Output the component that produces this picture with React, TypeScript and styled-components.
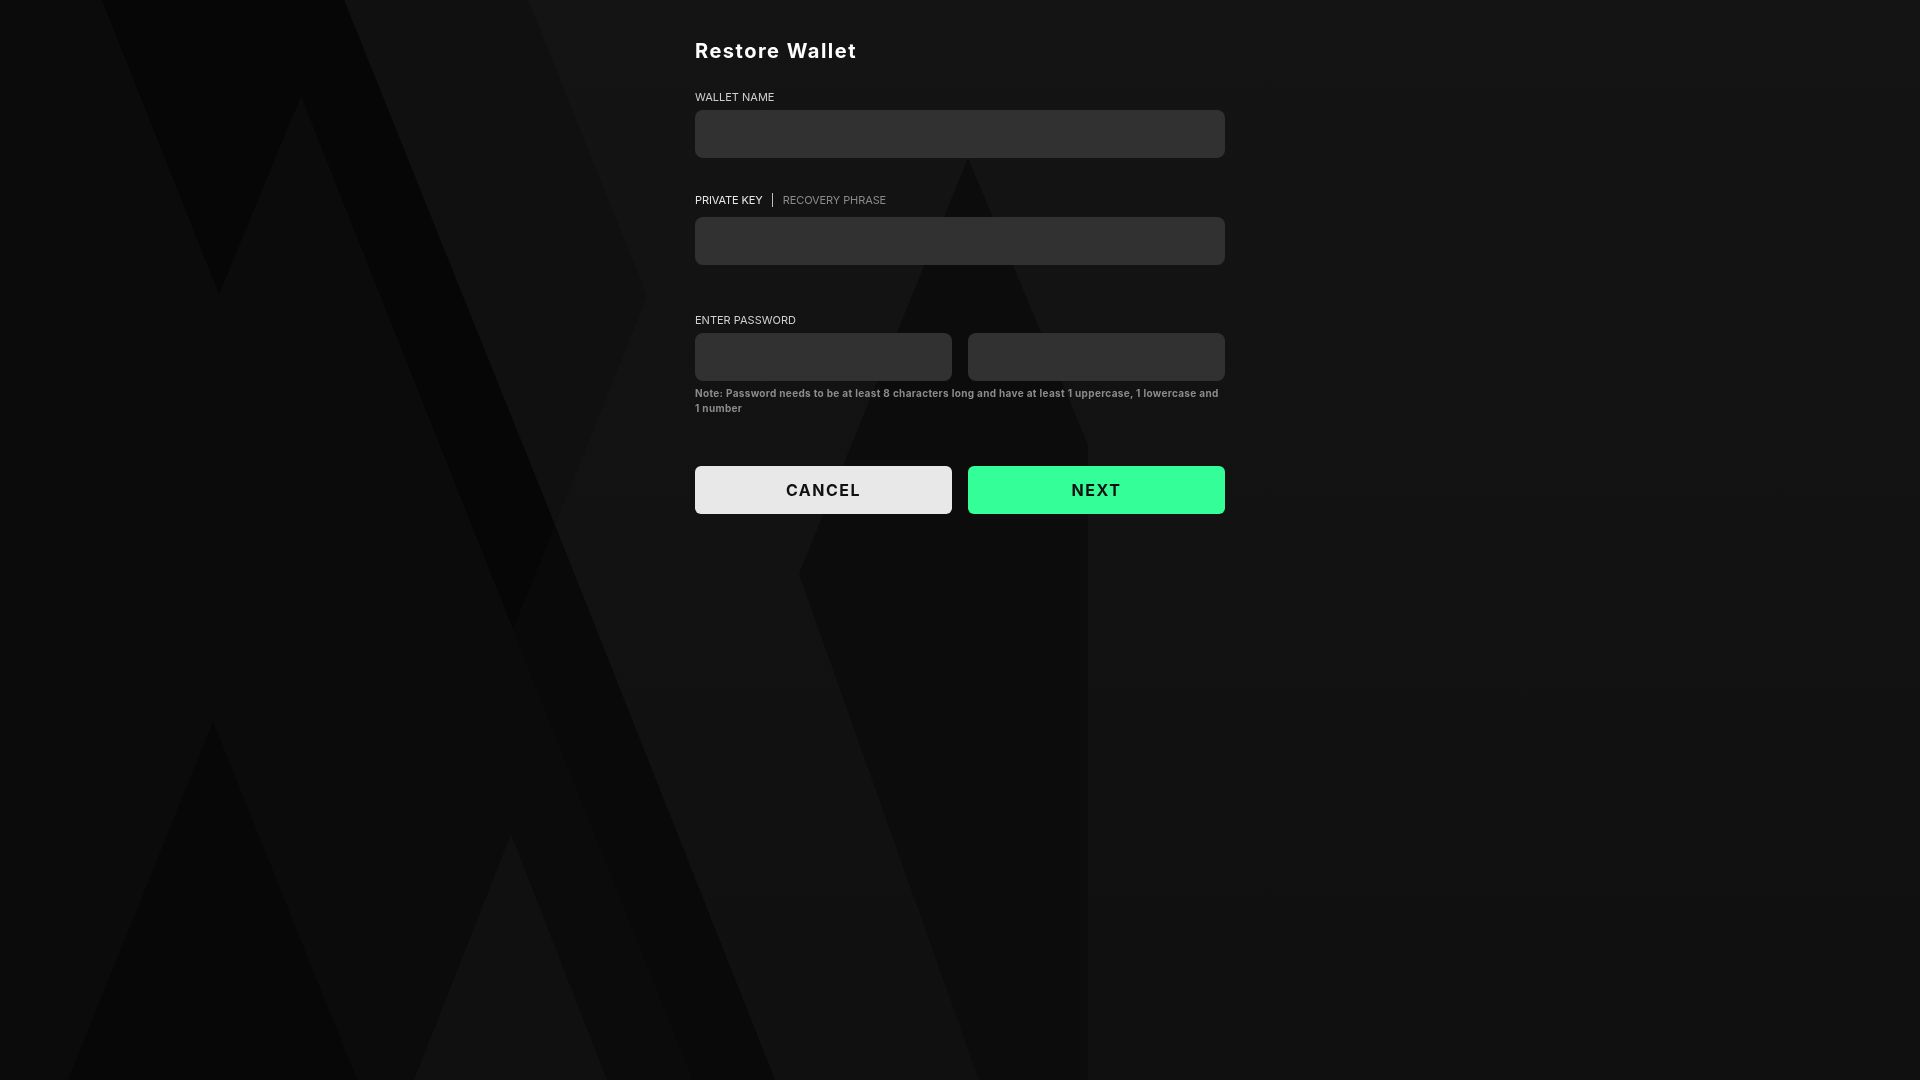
import styled, { createGlobalStyle } from "styled-components";

const GlobalStyle = createGlobalStyle`
  html, body {
    margin: 0;
    padding: 0;
    background: #131313;
  }
  body {
    font-family: Inter, "Open Sans", "DejaVu Sans", sans-serif;
    color: #ffffff;
  }
  * {
    box-sizing: border-box;
  }
`;

const Page = styled.div`
  position: relative;
  min-height: 100vh;
  display: flex;
  justify-content: center;
  overflow: hidden;
`;

const Backdrop = styled.svg`
  position: fixed;
  inset: 0;
  width: 100%;
  height: 100%;
  z-index: 0;
`;

const Form = styled.form`
  position: relative;
  z-index: 1;
  width: 530px;
  padding-top: 39px;
  display: flex;
  flex-direction: column;
`;

const Title = styled.h1`
  margin: 0;
  font-size: 20px;
  line-height: 24px;
  font-weight: 700;
  color: #ffffff;
  letter-spacing: 1.5px;
`;

const Field = styled.div<{ $top: number }>`
  margin-top: ${({ $top }) => $top}px;
  display: flex;
  flex-direction: column;
`;

const Label = styled.label`
  display: block;
  font-size: 11px;
  line-height: 14px;
  font-weight: 400;
  color: #cfcfcf;
  text-transform: uppercase;
  margin-bottom: 6px;
`;

const Tabs = styled.div`
  display: flex;
  align-items: center;
  height: 14px;
  margin-bottom: 10px;
`;

const Tab = styled.span<{ $active?: boolean }>`
  font-size: 11px;
  line-height: 14px;
  color: ${({ $active }) => ($active ? "#e6e6e6" : "#8a8a8a")};
  text-transform: uppercase;
  letter-spacing: -0.1px;
  cursor: pointer;
`;

const TabDivider = styled.span`
  width: 1px;
  height: 14px;
  background: #bdbdbd;
  margin: 0 10px 0 9px;
`;

const Input = styled.input`
  width: 100%;
  height: 48px;
  border: none;
  outline: none;
  border-radius: 8px;
  background: #313131;
  color: #ffffff;
  padding: 0 16px;
  font-family: inherit;
  font-size: 14px;
`;

const Pair = styled.div`
  display: grid;
  grid-template-columns: 1fr 1fr;
  gap: 16px;
`;

const Note = styled.p`
  margin: 5px 0 0;
  font-size: 10px;
  line-height: 15px;
  font-weight: 700;
  letter-spacing: 0.33px;
  color: #8b8b8b;
`;

const NoBreak = styled.span`
  white-space: nowrap;
`;

const Actions = styled.div`
  margin-top: 50px;
  display: grid;
  grid-template-columns: 1fr 1fr;
  gap: 16px;
`;

const Button = styled.button<{ $primary?: boolean }>`
  height: 48px;
  border: none;
  border-radius: 6px;
  background: ${({ $primary }) => ($primary ? "#34fe98" : "#e8e8e8")};
  color: #111111;
  font-family: inherit;
  font-size: 16px;
  font-weight: 700;
  letter-spacing: 1.5px;
  text-transform: uppercase;
  cursor: pointer;
`;

const BackgroundArt = () => (
  <Backdrop viewBox="0 0 1920 1080" preserveAspectRatio="none">
    <defs>
      <linearGradient id="base" x1="0" y1="0" x2="0" y2="1">
        <stop offset="0" stopColor="#141414" />
        <stop offset="1" stopColor="#101010" />
      </linearGradient>
    </defs>
    <rect x="0" y="0" width="1920" height="1080" fill="url(#base)" />
    <polygon points="0,0 344,0 775,1080 0,1080" fill="#0b0b0b" />
    <polygon points="344,0 528,0 647,296 555,525" fill="#101010" />
    <polygon points="102,0 344,0 555,525 513,629 301,96 219,294" fill="#060606" />
    <polygon points="513,629 555,525 775,1080 693,1080" fill="#090909" />
    <polygon points="968,158 1088,445 1088,1080 979,1080 799,574" fill="#0c0c0c" />
    <polygon points="213,722 357,1080 68,1080" fill="#070707" />
    <polygon points="511,834 607,1080 414,1080" fill="#101010" />
  </Backdrop>
);

const App = () => {
  return (
    <>
      <GlobalStyle />
      <Page>
        <BackgroundArt />
        <Form onSubmit={(e) => e.preventDefault()}>
          <Title>Restore Wallet</Title>

          <Field $top={27}>
            <Label>Wallet Name</Label>
            <Input type="text" />
          </Field>

          <Field $top={35}>
            <Tabs>
              <Tab $active>Private Key</Tab>
              <TabDivider />
              <Tab>Recovery Phrase</Tab>
            </Tabs>
            <Input type="text" />
          </Field>

          <Field $top={48}>
            <Label>Enter Password</Label>
            <Pair>
              <Input type="password" />
              <Input type="password" />
            </Pair>
            <Note>
              Note: Password needs to be at least 8 characters long and have at
              least 1 uppercase, 1 lowercase and <NoBreak>1 number</NoBreak>
            </Note>
          </Field>

          <Actions>
            <Button type="button">Cancel</Button>
            <Button type="submit" $primary>
              Next
            </Button>
          </Actions>
        </Form>
      </Page>
    </>
  );
};

export default App;
